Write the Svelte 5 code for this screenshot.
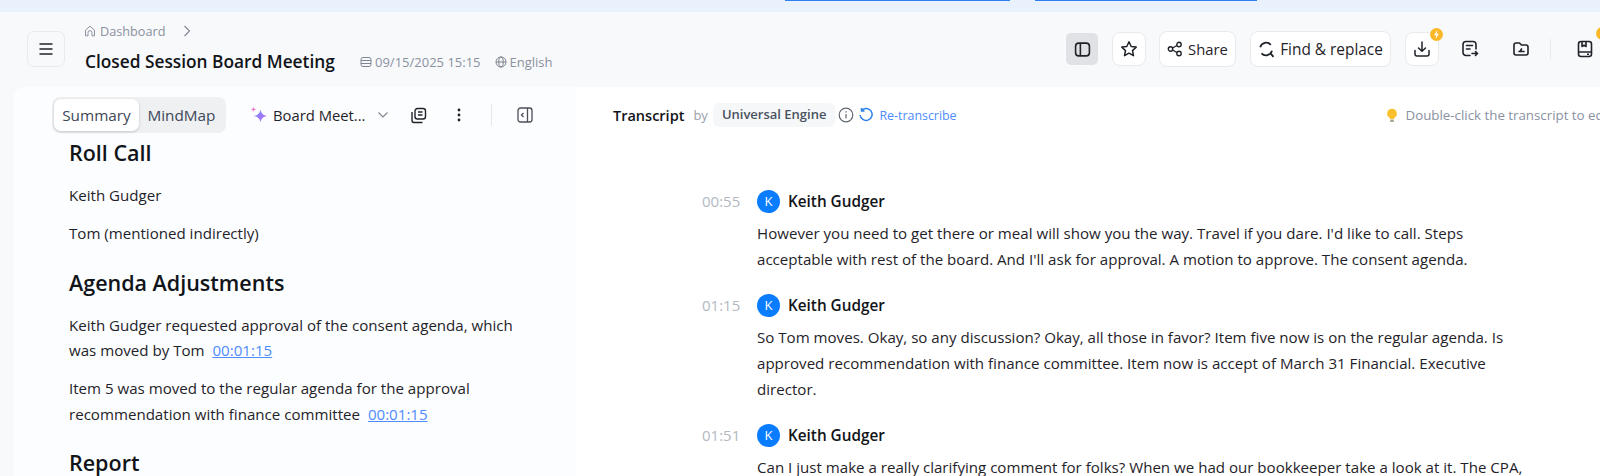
<script>
  const rows = [
    {
      time: "00:55",
      lines: [
        "However you need to get there or meal will show you the way. Travel if you dare. I'd like to call. Steps",
        "acceptable with rest of the board. And I'll ask for approval. A motion to approve. The consent agenda.",
      ],
    },
    {
      time: "01:15",
      lines: [
        "So Tom moves. Okay, so any discussion? Okay, all those in favor? Item five now is on the regular agenda. Is",
        "approved recommendation with finance committee. Item now is accept of March 31 Financial. Executive",
        "director.",
      ],
    },
    {
      time: "01:51",
      lines: ["Can I just make a really clarifying comment for folks? When we had our bookkeeper take a look at it. The CPA,"],
    },
  ];
</script>

<div class="page">
  <div class="topstrip">
    <span class="tab-line first"></span>
    <span class="tab-line"></span>
  </div>

  <header>
    <button class="menu" aria-label="menu">
      <svg width="16" height="16" viewBox="0 0 16 16" fill="none" stroke="#1f2329" stroke-width="1.4"><path d="M1.500 3h13M1.500 8h13M1.500 13h13" /></svg>
    </button>
    <div class="heading">
      <div class="crumb">
        <svg width="12" height="12" viewBox="0 0 12 12" fill="none" stroke="#8a919f" stroke-width="1"><path d="M1.500 5.200 6 1.200l4.500 4v5.600H8V7.600a2 2 0 0 0-4 0v3.200H1.500z" /></svg>
        <span>Dashboard</span>
        <svg class="crumb-chev" width="10" height="14" viewBox="0 0 10 14" fill="none" stroke="#7d8490" stroke-width="1.100"><path d="m2.500 2 5 5-5 5" /></svg>
      </div>
      <div class="title-row">
        <h1>Closed Session Board Meeting</h1>
        <span class="meta date">
          <svg width="12" height="12" viewBox="0 0 12 12" fill="none" stroke="#7d8490" stroke-width="1"><rect x="1" y="1.500" width="10" height="9" rx="2" /><path d="M1 4.500h10M1 7.500h10" /></svg>
          09/15/2025 15:15
        </span>
        <span class="meta lang">
          <svg width="12" height="12" viewBox="0 0 12 12" fill="none" stroke="#7d8490" stroke-width="1"><circle cx="6" cy="6" r="5" /><ellipse cx="6" cy="6" rx="2.200" ry="5" /><path d="M1 6h10" /></svg>
          English
        </span>
      </div>
    </div>

    <div class="actions">
      <button class="toggle" aria-label="layout">
        <svg width="17" height="17" viewBox="0 0 16 16" fill="none" stroke="#1f2329" stroke-width="1.500"><rect x="1.500" y="2" width="13" height="12" rx="3" /><path d="M6 2v12" /></svg>
      </button>
      <button class="btn square" aria-label="favorite">
        <svg width="18" height="18" viewBox="0 0 18 18" fill="none" stroke="#1f2329" stroke-width="1.500" stroke-linejoin="round"><path d="m9 1.800 2.200 4.700 5 .6-3.700 3.500 1 5.100L9 13.200l-4.500 2.500 1-5.100L1.800 7.100l5-.6z" /></svg>
      </button>
      <button class="btn share">
        <svg width="16" height="16" viewBox="0 0 16 16" fill="none" stroke="#1f2329" stroke-width="1.400"><circle cx="3.500" cy="8" r="2.200" /><circle cx="12" cy="3.500" r="2.200" /><circle cx="12" cy="12.500" r="2.200" /><path d="m5.500 7 4.500-2.500M5.500 9l4.500 2.500" /></svg>
        Share
      </button>
      <button class="btn find">
        <svg width="17" height="17" viewBox="0 0 17 17" fill="none" stroke="#1f2329" stroke-width="1.800"><path d="M2.200 6.200A6.200 6.200 0 0 1 12.800 3.800M14 9.800a6.200 6.200 0 0 1-10.500 2.600M13 12.800l2.500 3" /></svg>
        Find &amp; replace
      </button>
      <button class="btn square dl" aria-label="download">
        <svg width="18" height="18" viewBox="0 0 18 18" fill="none" stroke="#1f2329" stroke-width="1.500" stroke-linecap="round" stroke-linejoin="round"><path d="M9 2v9M5.500 8 9 11.300 12.500 8M2 10.500V14a2 2 0 0 0 2 2h10a2 2 0 0 0 2-2v-3.500" /></svg>
        <span class="bolt">
          <svg width="11" height="11" viewBox="0 0 10 10"><path d="M5.800 1 2.800 5.600h2L4.200 9l3-4.700h-2z" fill="#fff" /></svg>
        </span>
      </button>
      <span class="plain">
        <svg width="18" height="18" viewBox="0 0 18 18" fill="none" stroke="#1f2329" stroke-width="1.600" stroke-linecap="round" stroke-linejoin="round"><path d="M9 15.500H5a3 3 0 0 1-3-3v-8a3 3 0 0 1 3-3h7a3 3 0 0 1 3 3V9M5.500 5.500h6M5.500 9H9M11 13.500h5.500M14.500 11.500l2 2-2 2" /></svg>
      </span>
      <span class="plain">
        <svg width="18" height="18" viewBox="0 0 18 18" fill="none" stroke="#1f2329" stroke-width="1.600" stroke-linecap="round" stroke-linejoin="round"><path d="M2 5a2 2 0 0 1 2-2h3.500L9.500 5H14a2 2 0 0 1 2 2v6a2 2 0 0 1-2 2H4a2 2 0 0 1-2-2zM7 11.500h5M9.500 9l-1.500 2.500" /></svg>
      </span>
      <span class="vline"></span>
      <span class="plain save">
        <svg width="18" height="18" viewBox="0 0 18 18" fill="none" stroke="#1f2329" stroke-width="1.600" stroke-linejoin="round"><rect x="2.500" y="1.500" width="13" height="15" rx="2.500" /><path d="M2.500 12h13M6 1.500v5l2-1.300 2 1.300v-5M11 14.300h2" /></svg>
        <span class="bolt"></span>
      </span>
    </div>
  </header>

  <main>
    <section class="summary">
      <div class="toolbar">
        <div class="tabs">
          <span class="tab active">Summary</span>
          <span class="tab">MindMap</span>
        </div>
        <div class="template">
          <svg width="18" height="18" viewBox="0 0 18 18">
            <defs>
              <linearGradient id="spark" x1="0" y1="0" x2="1" y2="1"><stop offset="0" stop-color="#6d8dfb" /><stop offset="1" stop-color="#c56bf2" /></linearGradient>
            </defs>
            <path d="M10.500 3.500c.7 3.800 2.500 5.900 7 6.500-4.500.7-6.300 2.700-7 6.500-.7-3.800-2.500-5.800-7-6.500 4.500-.6 6.300-2.700 7-6.500z" fill="url(#spark)" />
            <path d="M3.500.8c.3 1.500 1 2.300 2.600 2.600-1.600.3-2.300 1-2.600 2.600C3.200 4.400 2.500 3.700.9 3.400 2.500 3.100 3.200 2.300 3.500.800z" fill="#f277c6" />
          </svg>
          <span>Board Meet...</span>
          <svg class="tpl-chev" width="12" height="8" viewBox="0 0 12 8" fill="none" stroke="#7d8490" stroke-width="1.100"><path d="m1.500 1.500 4.500 4.500 4.500-4.500" /></svg>
        </div>
        <svg class="copy" width="17" height="17" viewBox="0 0 17 17" fill="none" stroke="#1f2329" stroke-width="1.400" stroke-linejoin="round"><rect x="5" y="1.500" width="10.500" height="10.500" rx="2.500" /><path d="M8 5h4.500M8 8h4.500M2 5v8.500a2 2 0 0 0 2 2h8.500" /></svg>
        <svg class="dots" width="4" height="14" viewBox="0 0 4 14" fill="#1f2329"><circle cx="2" cy="2" r="1.400" /><circle cx="2" cy="7" r="1.400" /><circle cx="2" cy="12" r="1.400" /></svg>
        <span class="tool-line"></span>
        <svg class="collapse" width="16" height="16" viewBox="0 0 16 16" fill="none" stroke="#4a4f57" stroke-width="1.300"><rect x="1" y="1" width="14" height="14" rx="2.500" /><path d="M10.500 1v14M6.500 6 4.500 8l2 2" /></svg>
      </div>

      <h2>Roll Call</h2>
      <p>Keith Gudger</p>
      <p>Tom (mentioned indirectly)</p>
      <h2>Agenda Adjustments</h2>
      <p>Keith Gudger requested approval of the consent agenda, which was moved by Tom <a href="#t">00:01:15</a></p>
      <p>Item 5 was moved to the regular agenda for the approval recommendation with finance committee <a href="#t">00:01:15</a></p>
      <h2>Report</h2>
    </section>

    <section class="transcript">
      <div class="bar">
        <strong>Transcript</strong>
        <span class="by">by</span>
        <span class="engine">Universal Engine</span>
        <svg class="info" width="16" height="16" viewBox="0 0 16 16" fill="none" stroke="#5f6570" stroke-width="1.200"><circle cx="8" cy="8" r="6.800" /><path d="M8 7v4.500M8 4.300v1.300" /></svg>
        <svg class="redo" width="16" height="16" viewBox="0 0 16 16" fill="none" stroke="#2f80e8" stroke-width="1.500"><path d="M3.800 3.200A6 6 0 1 1 2.100 8M3.500 1v3h3" /></svg>
        <span class="re">Re-transcribe</span>
        <span class="hint">
          <svg width="12" height="15" viewBox="0 0 12 15"><path d="M6 .8a4.800 4.800 0 0 0-2.700 8.800c.5.400.7.800.7 1.400h4c0-.6.200-1 .7-1.400A4.800 4.800 0 0 0 6 .800z" fill="#fbc02d" /><rect x="4" y="11.400" width="4" height="2.600" rx="1" fill="#b0a79b" /></svg>
          Double-click the transcript to edit
        </span>
      </div>

      {#each rows as row}
        <article>
          <div class="who">
            <span class="time">{row.time}</span>
            <span class="avatar">K</span>
            <span class="name">Keith Gudger</span>
          </div>
          <div class="said">
            {#each row.lines as line}
              <div>{line}</div>
            {/each}
          </div>
        </article>
      {/each}
    </section>
  </main>
</div>

<style>
  :global(body) {
    margin: 0;
    background: #f8f9fb;
  }

  .page {
    width: 1600px;
    height: 476px;
    overflow: hidden;
    font-family: "Open Sans", "Noto Sans", sans-serif;
    color: #1f2329;
    background: #f8f9fb;
  }

  .topstrip {
    height: 12px;
    background: #e9f1fd;
    display: flex;
    padding-left: 785px;
    gap: 25px;
  }

  .tab-line {
    width: 222px;
    height: 1px;
    background: #2f80f0;
  }

  .tab-line.first {
    width: 225px;
  }

  header {
    height: 75px;
    display: flex;
    align-items: flex-start;
  }

  button {
    font: inherit;
    color: inherit;
    background: #fff;
    padding: 0;
    cursor: pointer;
  }

  .menu {
    flex: none;
    width: 38px;
    height: 36px;
    margin: 19px 19px 0 27px;
    border: 1px solid #e8eaee;
    border-radius: 7px;
    background: #f8f9fb;
    display: flex;
    align-items: center;
    justify-content: center;
  }

  .heading {
    flex: none;
    width: 982px;
    padding-top: 10px;
  }

  .crumb {
    display: flex;
    align-items: center;
    gap: 4px;
    font-size: 12.700px;
    color: #8a919f;
    height: 18px;
  }

  .crumb-chev {
    margin-left: 13px;
  }

  .title-row {
    display: flex;
    align-items: center;
    margin-top: 10px;
  }

  h1 {
    margin: 0;
    font-size: 17.300px;
    font-weight: 600;
    color: #111418;
    line-height: 24px;
    width: 276px;
    white-space: nowrap;
    padding-left: 1px;
    box-sizing: border-box;
  }

  .meta {
    display: flex;
    align-items: center;
    gap: 3px;
    font-size: 13px;
    color: #8a919f;
  }

  .lang {
    margin-left: 14px;
  }

  .actions {
    flex: none;
    display: flex;
    align-items: center;
    height: 36px;
    margin-top: 19px;
  }

  .toggle {
    width: 32px;
    height: 32px;
    border: 0;
    border-radius: 5px;
    background: #e0e2e6;
    display: flex;
    align-items: center;
    justify-content: center;
    margin-right: 14px;
  }

  .btn {
    height: 36px;
    border: 1px solid #e8eaee;
    border-radius: 8px;
    display: flex;
    align-items: center;
    justify-content: center;
    gap: 5px;
    font-size: 14.800px;
    box-sizing: border-box;
    white-space: nowrap;
  }

  .square {
    width: 34px;
    height: 34px;
  }

  .share {
    width: 77px;
    margin-left: 13px;
  }

  .find {
    width: 141px;
    margin-left: 14px;
    font-size: 15.400px;
  }

  .dl {
    margin-left: 14px;
    position: relative;
  }

  .bolt {
    position: absolute;
    top: -5px;
    right: -5px;
    width: 13px;
    height: 13px;
    border-radius: 50%;
    background: #fbb829;
    display: flex;
    align-items: center;
    justify-content: center;
  }

  .plain {
    display: flex;
    margin-left: 22px;
    width: 18px;
    position: relative;
  }

  .plain + .plain {
    margin-left: 33px;
  }

  .vline {
    width: 1px;
    height: 20px;
    background: #e6e8ec;
    margin-left: 20px;
  }

  .save {
    margin-left: 25px;
  }

  .save .bolt {
    top: -13px;
    right: -15px;
  }

  main {
    margin-left: 14px;
    height: 389px;
    display: flex;
    background: #fff;
    border-top-left-radius: 10px;
    overflow: hidden;
  }

  .summary {
    flex: none;
    width: 562px;
    box-sizing: border-box;
    background: #fcfdff;
    padding: 10px 0 0 55px;
  }

  .toolbar {
    display: flex;
    align-items: center;
    height: 36px;
    margin-left: -17px;
    margin-bottom: 5px;
  }

  .tabs {
    display: flex;
    width: 174px;
    height: 36px;
    box-sizing: border-box;
    padding: 2px;
    border-radius: 8px;
    background: #eef0f2;
    font-size: 15.300px;
    color: #3d4757;
  }

  .tab {
    display: flex;
    align-items: center;
    justify-content: center;
    width: 85px;
    height: 32px;
    border-radius: 7px;
  }

  .tab.active {
    background: #fff;
    box-shadow: 0 1px 3px rgba(0, 0, 0, 0.18);
  }

  .template {
    display: flex;
    align-items: center;
    gap: 5px;
    margin-left: 24px;
    font-size: 14.800px;
    white-space: nowrap;
  }

  .tpl-chev {
    margin-left: 6px;
  }

  .copy {
    margin-left: 21px;
  }

  .dots {
    margin-left: 30px;
  }

  .tool-line {
    width: 1px;
    height: 22px;
    background: #e6e8ec;
    margin-left: 30px;
  }

  .collapse {
    margin-left: 25px;
  }

  h2 {
    margin: 0;
    font-size: 21.500px;
    font-weight: 600;
    line-height: 30px;
    color: #111418;
  }

  .summary p {
    margin: 0;
    width: 470px;
    font-size: 15.100px;
    line-height: 25.500px;
    padding-top: 12.500px;
  }

  .summary h2 + p {
    padding-top: 15px;
  }

  .summary p + h2 {
    margin-top: 21px;
  }

  a {
    color: #4e8cff;
    margin-left: 4px;
  }

  .transcript {
    flex: 1;
    padding: 16px 0 0 37px;
    white-space: nowrap;
    overflow: hidden;
  }

  .bar {
    display: flex;
    align-items: center;
    height: 24px;
    font-size: 14px;
    margin-bottom: 62px;
  }

  .bar svg {
    flex: none;
  }

  .bar strong {
    font-weight: 600;
    font-size: 14.500px;
    color: #111418;
  }

  .by {
    color: #9aa0aa;
    font-size: 13px;
    margin-left: 9px;
  }

  .engine {
    margin-left: 5px;
    padding: 0 9px;
    height: 24px;
    line-height: 23px;
    border-radius: 6px;
    background: #f6f7f9;
    font-size: 13px;
    font-weight: 600;
    color: #4a5260;
  }

  .info {
    margin-left: 3px;
  }

  .redo {
    margin-left: 4px;
  }

  .re {
    margin-left: 5px;
    font-size: 12.400px;
    color: #4e8cff;
  }

  .hint {
    display: flex;
    align-items: center;
    gap: 8px;
    margin-left: 429px;
    font-size: 13.300px;
    color: #8a919f;
  }

  article {
    margin-left: 144px;
    margin-bottom: 21px;
    position: relative;
  }

  .who {
    display: flex;
    align-items: center;
    height: 24px;
  }

  .time {
    position: absolute;
    left: -55px;
    font-size: 15px;
    color: #b3b9c2;
  }

  .avatar {
    width: 23px;
    height: 23px;
    border-radius: 50%;
    background: #0a7cff;
    color: #fff;
    font-size: 13px;
    display: flex;
    align-items: center;
    justify-content: center;
  }

  .name {
    margin-left: 8px;
    font-size: 15.300px;
    font-weight: 600;
    color: #111418;
  }

  .said {
    margin-top: 7px;
    font-size: 15.100px;
    line-height: 26px;
  }
</style>
